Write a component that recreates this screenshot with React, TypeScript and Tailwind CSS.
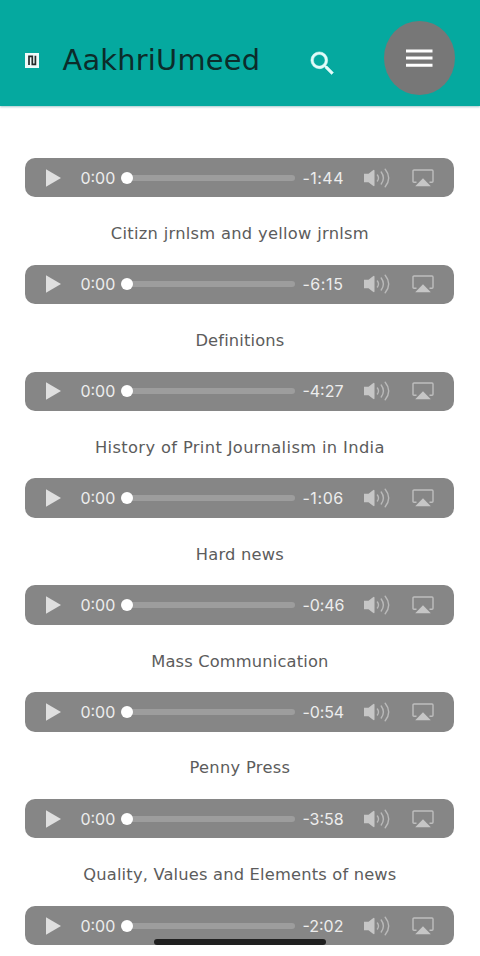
type Track = {
  title: string;
  remaining: string;
  titleClass: string;
  timeClass: string;
};

const tracks: Track[] = [
  {
    title: "Citizn jrnlsm and yellow jrnlsm",
    remaining: "-1:44",
    titleClass: "tracking-[0.29px]",
    timeClass: "tracking-[0.5px]",
  },
  {
    title: "Definitions",
    remaining: "-6:15",
    titleClass: "tracking-[0.15px]",
    timeClass: "tracking-[0.6px]",
  },
  {
    title: "History of Print Journalism in India",
    remaining: "-4:27",
    titleClass: "tracking-[0.36px]",
    timeClass: "tracking-normal",
  },
  {
    title: "Hard news",
    remaining: "-1:06",
    titleClass: "tracking-[0.2px]",
    timeClass: "tracking-[0.6px]",
  },
  {
    title: "Mass Communication",
    remaining: "-0:46",
    titleClass: "tracking-[0.15px]",
    timeClass: "tracking-[-0.1px]",
  },
  {
    title: "Penny Press",
    remaining: "-0:54",
    titleClass: "tracking-[0.3px]",
    timeClass: "tracking-[-0.1px]",
  },
  {
    title: "Quality, Values and Elements of news",
    remaining: "-3:58",
    titleClass: "tracking-[0.18px]",
    timeClass: "tracking-normal",
  },
  {
    title: "",
    remaining: "-2:02",
    titleClass: "",
    timeClass: "tracking-normal",
  },
];

const Logo = () => (
  <svg viewBox="0 0 14 15" className="h-[15px] w-[14px] shrink-0">
    <rect width="14" height="15" fill="#effafa" />
    <path
      d="M4 12V3.4H7.3V11.3H10.4V2.8"
      fill="none"
      stroke="#252b2b"
      strokeWidth="1.7"
    />
  </svg>
);

const SearchIcon = () => (
  <svg viewBox="0 0 24 24" className="size-[31px] shrink-0" fill="#e2fbf9" stroke="#e2fbf9" strokeWidth="0.4">
    <path d="M15.5 14h-.79l-.28-.27A6.47 6.47 0 0 0 16 9.5 6.5 6.5 0 1 0 9.5 16c1.61 0 3.09-.59 4.23-1.57l.27.28v.79l5 4.99L20.49 19l-4.99-5zm-6 0C7.01 14 5 11.99 5 9.5S7.01 5 9.5 5 14 7.01 14 9.5 11.99 14 9.5 14z" />
  </svg>
);

const MenuIcon = () => (
  <svg viewBox="0 0 27 18" className="h-[18px] w-[27px] shrink-0">
    <path d="M0 1.9H26.5M0 9H26.5M0 16.2H26.5" stroke="#fff" strokeWidth="3" />
  </svg>
);

const PlayIcon = () => (
  <svg viewBox="0 0 15 18" className="h-[18px] w-[15px] shrink-0">
    <path d="M0 0.3L15 9L0 17.7Z" fill="#dfdfdf" />
  </svg>
);

const VolumeIcon = () => (
  <svg viewBox="0 0 26 20" className="h-5 w-[26px] shrink-0">
    <path d="M0 5.8H4.5L9 2.2Q10.5 1.2 10.5 2.8V17.2Q10.5 18.8 9 17.8L4.5 14.2H0Z" fill="#c6c6c6" />
    <g fill="none" stroke="#b9b9b9" strokeWidth="1.4" strokeLinecap="round">
      <path d="M13.4 7Q15.6 10 13.4 13" />
      <path d="M17.2 4Q21.6 10 17.2 16" />
      <path d="M21.2 1.3Q28.2 10 21.2 18.7" />
    </g>
  </svg>
);

const AirplayIcon = () => (
  <svg viewBox="0 0 22 18" className="h-[18px] w-[22px] shrink-0">
    <path
      d="M4.5 13.3H2Q1 13.3 1 12.3V2Q1 1 2 1H20Q21 1 21 2V12.3Q21 13.3 20 13.3H17.5"
      fill="none"
      stroke="#bebebe"
      strokeWidth="1.4"
    />
    <path d="M11 9.3L18.8 17.3H3.2Z" fill="#c6c6c6" />
  </svg>
);

type AudioPlayerProps = {
  remaining: string;
  timeClass: string;
};

const AudioPlayer = ({ remaining, timeClass }: AudioPlayerProps) => (
  <div className="flex h-[39.5px] items-center rounded-[10px] bg-[#868686] pl-[20.5px] font-['Inter',sans-serif] text-[16px] text-[#ededed]">
    <PlayIcon />
    <span className="ml-[19.5px] w-[41px]">0:00</span>
    <div className="flex w-[174px] items-center">
      <div className="z-10 size-3 shrink-0 rounded-full bg-white" />
      <div className="-ml-1 h-1.5 grow rounded-r-full bg-[#9d9d9d]" />
    </div>
    <span className={`ml-[7px] w-[62px] ${timeClass}`}>{remaining}</span>
    <VolumeIcon />
    <div className="ml-[22px]">
      <AirplayIcon />
    </div>
  </div>
);

const Header = () => (
  <header className="flex h-[105.5px] bg-[#05a99f] pl-[25px] shadow-[0_1px_2px_rgba(0,100,110,0.35)]">
    <div className="mt-[53px]">
      <Logo />
    </div>
    <h1 className="mt-[42px] ml-[23.5px] w-[244.5px] text-[28.8px] leading-9 tracking-[0.25px] text-[#0c2c2a]">
      AakhriUmeed
    </h1>
    <button aria-label="Search" className="mt-[48px] size-[31px]">
      <SearchIcon />
    </button>
    <button
      aria-label="Menu"
      className="mt-[21px] ml-[46px] flex h-[74px] w-[70.5px] items-center justify-center rounded-[50%] bg-[#777777]"
    >
      <MenuIcon />
    </button>
  </header>
);

const App = () => {
  return (
    <div className="relative h-[956px] w-[480px] overflow-hidden bg-white font-['DejaVu_Sans',sans-serif]">
      <Header />
      <main className="pt-[52.3px] pr-[25.6px] pl-[25.4px]">
        {tracks.map((track) => (
          <section key={track.remaining} className="h-[106.87px]">
            <AudioPlayer remaining={track.remaining} timeClass={track.timeClass} />
            <p
              className={`mt-[24.8px] text-center text-[16.3px] leading-6 whitespace-nowrap text-[#5c5c5c] ${track.titleClass}`}
            >
              {track.title}
            </p>
          </section>
        ))}
      </main>
      <div className="absolute top-[939px] left-[154px] h-1.5 w-[172px] rounded-full bg-[#202020]" />
    </div>
  );
};

export default App;
